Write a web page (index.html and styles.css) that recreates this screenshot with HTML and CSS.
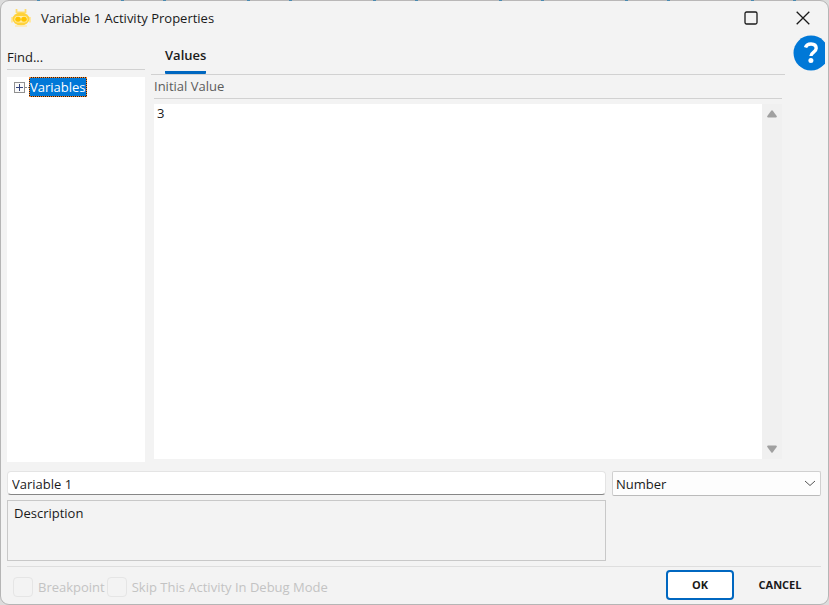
FILE: index.html
```html
<!DOCTYPE html>
<html lang="en">
<head>
    <meta charset="UTF-8">
    <meta name="viewport" content="width=device-width, initial-scale=1.0">
    <title>Variable 1 Activity Properties</title>
    <link rel="stylesheet" href="styles.css">
</head>
<body>
    <form class="dialog">
        <header class="title-bar">
            <svg class="logo" width="20" height="20" viewBox="0 0 20 20">
                <path d="M5.500 1v4M14.500 1v4M5.500 4.500h9" fill="none" stroke="#ffdc6b" stroke-width="1.800"/>
                <path d="M1 9v5.500M19 9v5.500" stroke="#ffe7a0" stroke-width="2"/>
                <ellipse cx="10" cy="11" rx="8.500" ry="6.500" fill="#ffd23a"/>
                <rect x="3.500" y="8" width="13" height="6.400" rx="3.200" fill="#ffeeb0"/>
                <rect x="4.200" y="8.700" width="5.600" height="5" rx="2.500" fill="#ffc400"/>
                <rect x="10.200" y="8.700" width="5.600" height="5" rx="2.500" fill="#ffc400"/>
                <path d="M4 18h12" stroke="#ffe9ac" stroke-width="1.500"/>
            </svg>
            <h1>Variable 1 Activity Properties</h1>
            <button type="button" class="window-button" aria-label="Maximize">
                <svg width="14" height="14" viewBox="0 0 14 14"><rect x="1" y="1" width="12" height="12" rx="1.500" fill="none" stroke="#1a1a1a" stroke-width="1.300"/></svg>
            </button>
            <button type="button" class="window-button" aria-label="Close">
                <svg width="14" height="14" viewBox="0 0 14 14"><path d="M.7.7l12.600 12.600M13.300.7L.7 13.300" stroke="#1a1a1a" stroke-width="1.300"/></svg>
            </button>
        </header>

        <main class="main">
            <aside class="sidebar">
                <input type="text" class="find" placeholder="Find..." aria-label="Find">
                <div class="tree">
                    <div class="tree-item">
                        <button type="button" class="expand" aria-label="Expand">
                            <svg width="11" height="11" viewBox="0 0 11 11"><rect x=".5" y=".5" width="10" height="10" fill="#fafafa" stroke="#919191"/><path d="M2 5.500h7M5.500 2v7" stroke="#33437c"/></svg>
                        </button>
                        <span class="branch"></span>
                        <span class="tree-label">Variables</span>
                    </div>
                </div>
            </aside>

            <section class="content">
                <nav class="tabs">
                    <button type="button" class="tab">Values</button>
                </nav>
                <div class="panel">
                    <label class="panel-title" for="initial">Initial Value</label>
                    <div class="editor">
                        <textarea id="initial">3</textarea>
                        <div class="scrollbar">
                            <svg width="10" height="8" viewBox="0 0 10 8"><path d="M4.200.8q.8-1 1.600 0L9.700 6q.6 1.500-1 1.500H1.300Q-.3 7.500.3 6z" fill="#a0a0a0"/></svg>
                            <svg width="10" height="8" viewBox="0 0 10 8"><path d="M4.200 7.200q.8 1 1.600 0L9.700 2q.6-1.500-1-1.500H1.300Q-.3.5.3 2z" fill="#a0a0a0"/></svg>
                        </div>
                    </div>
                </div>
            </section>

            <div class="help-column">
                <button type="button" class="help" aria-label="Help">
                    <svg width="36" height="36" viewBox="0 0 36 36">
                        <circle cx="18" cy="18" r="17.500" fill="#0078d7"/>
                        <path d="M12.500 12.600c.8-2.700 3-3.600 5.500-3.600 3.200 0 5.200 1.600 5.200 4.300 0 4.100-5.300 4-5.300 7.700" fill="none" stroke="#fff" stroke-width="3.400"/>
                        <circle cx="17.900" cy="25.600" r="2.500" fill="#fff"/>
                    </svg>
                </button>
            </div>
        </main>

        <section class="details">
            <input type="text" class="name" value="Variable 1" aria-label="Name">
            <div class="type">
                <select aria-label="Type">
                    <option>Number</option>
                </select>
                <svg class="chevron" width="12" height="7" viewBox="0 0 12 7"><path d="M1 1l5 4.500L11 1" fill="none" stroke="#555"/></svg>
            </div>
            <textarea class="description" aria-label="Description">Description</textarea>
        </section>

        <footer class="footer">
            <label class="check"><input type="checkbox" disabled>Breakpoint</label>
            <label class="check"><input type="checkbox" disabled>Skip This Activity In Debug Mode</label>
            <button type="submit" class="button primary">OK</button>
            <button type="button" class="button">CANCEL</button>
        </footer>
    </form>
</body>
</html>
```
FILE: styles.css
```css
* {
    box-sizing: border-box;
    margin: 0;
    padding: 0;
}

body {
    background-color: #dcdcdc;
    font-family: "Open Sans", "Noto Sans", sans-serif;
    font-size: 13px;
    line-height: 18px;
    color: #1a1a1a;
}

input, textarea, select, button {
    font: inherit;
    color: inherit;
    border: none;
    border-radius: 0;
    outline: none;
    background: none;
}

svg {
    display: block;
}

.dialog {
    position: relative;
    display: flex;
    flex-direction: column;
    min-height: 100vh;
    border: 1px solid #b5b5b5;
    border-radius: 9px;
    background-color: #f3f3f3;
}

/* marks of the window behind, along the top edge */
.dialog::before {
    content: "";
    position: absolute;
    top: -1px;
    left: 7px;
    right: 8px;
    height: 1px;
    background: repeating-linear-gradient(to right, #b9b7b7 0 29px, #4a8ab0 29px 32px, #b9b7b7 32px 113px, #4a8ab0 113px 116px, #b9b7b7 116px 126px);
}

.title-bar {
    display: flex;
    align-items: center;
    height: 34px;
    padding-left: 10px;
}

.title-bar h1 {
    flex: 1;
    margin-left: 10px;
    font-size: 13px;
    font-weight: 400;
}

.window-button {
    display: flex;
    align-items: center;
    justify-content: center;
    width: 52px;
    height: 34px;
}

.window-button:last-child {
    width: 51px;
}

.main {
    flex: 1;
    display: flex;
}

.sidebar {
    display: flex;
    flex-direction: column;
    width: 144px;
    padding: 12px 0 0 6px;
}

.find {
    width: 100%;
    height: 23px;
    padding-bottom: 2px;
    border-bottom: 1px solid #d1d1d1;
}

.find::placeholder {
    color: #1a1a1a;
    opacity: 1;
}

.tree {
    flex: 1;
    margin-top: 7px;
    padding-left: 7px;
    background-color: #fff;
}

.tree-item {
    display: flex;
    align-items: center;
    height: 20px;
}

.branch {
    width: 4px;
    border-top: 1px dotted #888;
}

.tree-label {
    height: 20px;
    border: 1px dotted #ff8728;
    background: linear-gradient(#0078d7, #0078d7) padding-box, #222 border-box;
    color: #fff;
}

.content {
    flex: 1;
    display: flex;
    flex-direction: column;
    padding-left: 6px;
}

.tabs {
    display: flex;
    height: 40px;
    padding-left: 14px;
    border-bottom: 1px solid #d1d1d1;
}

.tab {
    padding-top: 4px;
    border-bottom: 3px solid #0067c0;
    border-radius: 1px;
    font-weight: 600;
}

.panel {
    flex: 1;
    display: flex;
    flex-direction: column;
    padding: 0 3px;
}

.panel-title {
    height: 24px;
    padding-top: 2px;
    border-bottom: 1px solid #d1d1d1;
    color: #5c5c5c;
}

.editor {
    flex: 1;
    display: flex;
    margin: 5px 0 3px;
}

.editor textarea {
    flex: 1;
    padding: 0 3px;
    background-color: #fff;
    resize: none;
}

.scrollbar {
    display: flex;
    flex-direction: column;
    align-items: center;
    justify-content: space-between;
    width: 20px;
    padding: 6px 0;
    background-color: #f0f0f0;
}

.help-column {
    width: 43px;
}

.help {
    display: block;
    width: 32px;
    margin-left: 8px;
    overflow: hidden;
}

.details {
    display: grid;
    grid-template-columns: 1fr 209px;
    gap: 4px 6px;
    margin: 9px 7px 5px 6px;
}

.name {
    height: 24px;
    padding: 2px 4px 0;
    border: 1px solid #e4e4e4;
    border-bottom-color: #868686;
    border-radius: 4px;
    background-color: #fff;
}

.type {
    position: relative;
    height: 25px;
}

.type select {
    width: 100%;
    height: 100%;
    padding: 1px 3px 0;
    border: 1px solid #d0d0d0;
    border-bottom-color: #bbb;
    border-radius: 2px;
    background-color: #fdfdfd;
    appearance: none;
}

.chevron {
    position: absolute;
    top: 9px;
    right: 5px;
    pointer-events: none;
}

.description {
    height: 61px;
    padding: 3px 6px;
    border: 1px solid #c8c8c8;
    resize: none;
}

.footer {
    display: flex;
    align-items: center;
    height: 38px;
    margin: 0 7px 0 6px;
    padding: 0 0 2px 6px;
    border-top: 1px solid #dedede;
}

.check {
    display: flex;
    align-items: center;
    gap: 5px;
    margin-right: 2px;
    padding-top: 4px;
    color: #c3c3c3;
}

.check input {
    width: 20px;
    height: 20px;
    border: 1px solid #e5e5e5;
    border-radius: 4px;
    appearance: none;
}

.button {
    width: 68px;
    height: 30px;
    margin-left: 12px;
    border-radius: 4px;
    font-size: 11px;
    font-weight: 700;
}

.button:last-child {
    margin-right: 7px;
}

.primary {
    margin-left: auto;
    border: 2px solid #0067c0;
    background-color: #fff;
}
```
